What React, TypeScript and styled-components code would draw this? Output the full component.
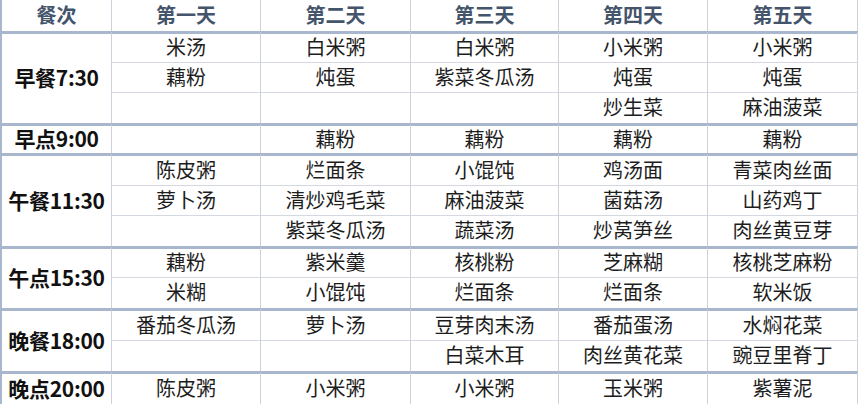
import React from "react"
import styled, { createGlobalStyle } from 'styled-components'

const GlobalStyle = createGlobalStyle`
body {
    margin: 0;
    background: #ffffff;
}
`

const thick = '#a9b7ce'
const thin = '#d3d8e1'
const vline = '#cdd2da'

const MenuTable = styled.table`
width: 858px;
table-layout: fixed;
border-collapse: separate;
border-spacing: 0;
font-family: "Noto Sans CJK SC", "Microsoft YaHei", sans-serif;
`

const HeadCell = styled.th`
box-sizing: border-box;
height: 31px;
padding: 0 0 1px;
border-right: 1px solid ${vline};
font-size: 20px;
font-weight: 700;
color: #44546a;
text-align: center;
vertical-align: middle;
line-height: 1;
&:first-child {
    border-left: 2px solid ${thick};
}
`

const MealCell = styled.td`
box-sizing: border-box;
padding: 0 0 2px;
border-top: 3px solid ${thick};
border-left: 2px solid ${thick};
border-right: 1px solid ${vline};
font-size: 21px;
font-weight: 700;
line-height: 1;
color: #111;
text-align: center;
vertical-align: middle;
white-space: nowrap;
letter-spacing: -0.3px;
`

const DishCell = styled.td<{ $first: boolean; $last: boolean; $h: number }>`
box-sizing: border-box;
height: ${p => p.$h}px;
padding: 0 0 2px;
border-top: ${p => p.$first ? `3px solid ${thick}` : 'none'};
border-bottom: ${p => p.$last ? 'none' : `1px solid ${thin}`};
border-right: 1px solid ${vline};
font-size: 20px;
font-weight: 400;
color: #1d1d1d;
text-align: center;
vertical-align: middle;
white-space: nowrap;
line-height: 1;
`

interface Meal {
    name: string
    first: number
    rows: string[][]
}

const days = ['第一天', '第二天', '第三天', '第四天', '第五天']

const meals: Meal[] = [
    {
        name: '早餐7:30', first: 32, rows: [
            ['米汤', '白米粥', '白米粥', '小米粥', '小米粥'],
            ['藕粉', '炖蛋', '紫菜冬瓜汤', '炖蛋', '炖蛋'],
            ['', '', '', '炒生菜', '麻油菠菜'],
        ]
    },
    {
        name: '早点9:00', first: 30, rows: [
            ['', '藕粉', '藕粉', '藕粉', '藕粉'],
        ]
    },
    {
        name: '午餐11:30', first: 33, rows: [
            ['陈皮粥', '烂面条', '小馄饨', '鸡汤面', '青菜肉丝面'],
            ['萝卜汤', '清炒鸡毛菜', '麻油菠菜', '菌菇汤', '山药鸡丁'],
            ['', '紫菜冬瓜汤', '蔬菜汤', '炒莴笋丝', '肉丝黄豆芽'],
        ]
    },
    {
        name: '午点15:30', first: 32, rows: [
            ['藕粉', '紫米羹', '核桃粉', '芝麻糊', '核桃芝麻粉'],
            ['米糊', '小馄饨', '烂面条', '烂面条', '软米饭'],
        ]
    },
    {
        name: '晚餐18:00', first: 33, rows: [
            ['番茄冬瓜汤', '萝卜汤', '豆芽肉末汤', '番茄蛋汤', '水焖花菜'],
            ['', '', '白菜木耳', '肉丝黄花菜', '豌豆里脊丁'],
        ]
    },
    {
        name: '晚点20:00', first: 33, rows: [
            ['陈皮粥', '小米粥', '小米粥', '玉米粥', '紫薯泥'],
        ]
    },
]

const widths = [112, 149, 150, 148, 149, 150]

export const App: React.FunctionComponent = () => {
    return (
        <>
            <GlobalStyle />
            <MenuTable>
                <colgroup>
                    {widths.map((w, i) => <col key={i} style={{ width: w }} />)}
                </colgroup>
                <thead>
                    <tr>
                        <HeadCell>餐次</HeadCell>
                        {days.map(d => <HeadCell key={d}>{d}</HeadCell>)}
                    </tr>
                </thead>
                {meals.map(meal => (
                    <tbody key={meal.name}>
                        {meal.rows.map((row, r) => (
                            <tr key={r}>
                                {r === 0 && <MealCell rowSpan={meal.rows.length}>{meal.name}</MealCell>}
                                {row.map((dish, c) => (
                                    <DishCell
                                        key={c}
                                        $first={r === 0}
                                        $last={r === meal.rows.length - 1}
                                        $h={r === 0 ? meal.first : 30}
                                    >
                                        {dish}
                                    </DishCell>
                                ))}
                            </tr>
                        ))}
                    </tbody>
                ))}
            </MenuTable>
        </>
    )
}

export default App
